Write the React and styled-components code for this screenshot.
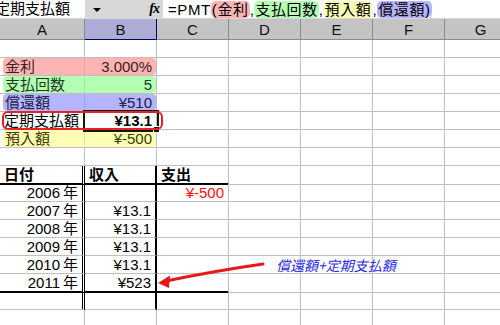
import React from 'react';
import styled, { createGlobalStyle } from 'styled-components';

const GlobalStyle = createGlobalStyle`
  html, body {
    margin:0;
    padding:0;
    background:#fff;
  }
  body {
    font-family:"Liberation Sans", "Noto Sans CJK JP", sans-serif;
  }
`;

const COLS = '85px repeat(6, 72px)';
const GRID = '1px solid #c0c0c0';

const Window = styled.div`
  position:relative;
  width:500px;
  height:325px;
  overflow:hidden;
  background:#fff;
`;

const FormulaBar = styled.div`
  display:flex;
  align-items:flex-start;
  height:19px;
  background:#d8d8d8;
`;

const NameBox = styled.div`
  width:85px;
  height:18px;
  background:#fff;
  overflow:hidden;
  display:flex;
  align-items:center;
  font-size:15px;
  line-height:18px;
  white-space:nowrap;

  span {
    margin-left:-5px;
  }
`;

const Controls = styled.div`
  width:78px;
  height:18px;
  display:flex;
  align-items:center;
  justify-content:space-between;
  padding:0 4px 0 8px;
  box-sizing:border-box;
`;

const DropArrow = styled.div`
  width:0;
  height:0;
  border-left:4px solid transparent;
  border-right:4px solid transparent;
  border-top:4px solid #000;
  margin-top:2px;
`;

const Fx = styled.span`
  font-family:"Liberation Serif", serif;
  font-style:italic;
  font-weight:bold;
  font-size:14px;
  letter-spacing:-1px;
`;

const FormulaInput = styled.div`
  flex:1;
  height:18px;
  background:#fff;
  display:flex;
  align-items:center;
  padding-left:5px;
  font-size:15px;
  line-height:17px;
  letter-spacing:0.6px;
  white-space:nowrap;
`;

const Token = styled.span`
  background:${p => p.$color};
  border-radius:5px;
  padding:0 1px;
`;

const HeaderRow = styled.div`
  display:grid;
  grid-template-columns:${COLS};
  height:21px;
`;

const HeaderCell = styled.div`
  background:${p => (p.$active ? '#acacd4' : '#c4c4c4')};
  border-right:1px solid ${p => (p.$active ? '#000060' : '#8a8a8a')};
  border-bottom:1px solid ${p => (p.$active ? '#000060' : '#8a8a8a')};
  box-sizing:border-box;
  display:flex;
  align-items:center;
  justify-content:center;
  font-size:15px;
  color:#111;
`;

const Row = styled.div`
  display:grid;
  grid-template-columns:${COLS};
  height:18px;
`;

const Cell = styled.div`
  position:relative;
  box-sizing:border-box;
  border-right:${p => p.$right || GRID};
  border-bottom:${p => p.$bottom || GRID};
  display:flex;
  align-items:center;
  justify-content:${p => (p.$align === 'right' ? 'flex-end' : 'flex-start')};
  padding:${p => (p.$flush ? '0' : '0 4px 0 4px')};
  font-size:15px;
  line-height:17px;
  font-weight:${p => (p.$bold ? 'bold' : 'normal')};
  color:${p => p.$color || '#000'};
  white-space:nowrap;
  ${p => p.$selected && `
    z-index:2;
    outline:2px solid #101800;
    outline-offset:0px;
    &::after {
      content:'';
      position:absolute;
      right:-4px;
      bottom:-4px;
      width:5px;
      height:5px;
      background:#101800;
      border:1px solid #fff;
    }
  `}
`;

const Fill = styled.div`
  flex:1;
  align-self:stretch;
  display:flex;
  align-items:center;
  justify-content:${p => (p.$edge === 'left' ? 'flex-start' : 'flex-end')};
  background:${p => p.$color};
  margin-left:${p => (p.$edge === 'left' ? '3px' : '0')};
  padding:${p => (p.$edge === 'left' ? '0 0 0 2px' : '0 4px 0 0')};
  border-radius:${p => (p.$edge === 'left' ? '4px 0 0 4px' : '0 4px 4px 0')};
  color:${p => p.$ink};
`;

const Ring = styled.div`
  position:absolute;
  left:2px;
  top:111px;
  width:161px;
  height:19px;
  box-sizing:border-box;
  border:2px solid #e8202a;
  border-radius:6px;
  z-index:3;
`;

const Note = styled.div`
  position:absolute;
  left:276px;
  top:256px;
  font-family:"Noto Sans CJK JP", sans-serif;
  font-size:14px;
  font-style:italic;
  color:#2a2ae8;
  line-height:18px;
  white-space:nowrap;
`;

const ArrowSvg = styled.svg`
  position:absolute;
  left:0;
  top:0;
  z-index:3;
  pointer-events:none;
`;

const HIGHLIGHTS = {
  pink: { bg: '#ffb4b4', ink: '#3c2020', line: '#e4a8a8' },
  green: { bg: '#b4ffb4', ink: '#203c20', line: '#a8e0a8' },
  blue: { bg: '#b4b4ff', ink: '#20204a', line: '#a0a0ec' },
  yellow: { bg: '#ffffb4', ink: '#3c3c00', line: '#e4e4a8' },
};

const params = [
  { label: '金利', value: '3.000%', hl: 'pink' },
  { label: '支払回数', value: '5', hl: 'green' },
  { label: '償還額', value: '¥510', hl: 'blue' },
  { label: '定期支払額', value: '¥13.1', selected: true },
  { label: '預入額', value: '¥-500', hl: 'yellow' },
];

const flows = [
  { year: '2006', income: '', out: '¥-500' },
  { year: '2007', income: '¥13.1' },
  { year: '2008', income: '¥13.1' },
  { year: '2009', income: '¥13.1' },
  { year: '2010', income: '¥13.1' },
  { year: '2011', income: '¥523', last: true },
];

const Blanks = ({ from = 0 }) =>
  Array.from({ length: 7 - from }).map((_, i) => <Cell key={i} />);

const TableRow = ({ a, b, c, cColor, bottom, bold, align = 'right' }) => {
  const line = bottom ? '2px solid #000' : undefined;
  return (
    <Row>
      <Cell $align={align} $bold={bold} $bottom={line} $right="3px double #000">{a}</Cell>
      <Cell $align={align} $bold={bold} $bottom={line} $right="2px solid #000">{b}</Cell>
      <Cell $align={align} $bold={bold} $bottom={line} $color={cColor}>{c}</Cell>
      <Blanks from={3} />
    </Row>
  );
};

function App() {
  return (
    <Window>
      <GlobalStyle />
      <FormulaBar>
        <NameBox><span>定期支払額</span></NameBox>
        <Controls>
          <DropArrow />
          <Fx>fx</Fx>
        </Controls>
        <FormulaInput>
          =PMT<Token $color="#ffb4b4">(金利</Token>,
          <Token $color="#b4ffb4">支払回数</Token>,
          <Token $color="#ffffb4">預入額</Token>,
          <Token $color="#b4b4ff">償還額)</Token>
        </FormulaInput>
      </FormulaBar>

      <HeaderRow>
        {['A', 'B', 'C', 'D', 'E', 'F', 'G'].map(l => (
          <HeaderCell key={l} $active={l === 'B'}>{l}</HeaderCell>
        ))}
      </HeaderRow>

      <Row><Blanks /></Row>

      {params.map(p => {
        const h = HIGHLIGHTS[p.hl];
        if (!h) {
          return (
            <Row key={p.label}>
              <Cell>{p.label}</Cell>
              <Cell $align="right" $bold $selected>{p.value}</Cell>
              <Blanks from={2} />
            </Row>
          );
        }
        return (
          <Row key={p.label}>
            <Cell $flush $right={`1px solid ${h.line}`}>
              <Fill $edge="left" $color={h.bg} $ink={h.ink}>{p.label}</Fill>
            </Cell>
            <Cell $flush>
              <Fill $edge="right" $color={h.bg} $ink={h.ink}>{p.value}</Fill>
            </Cell>
            <Blanks from={2} />
          </Row>
        );
      })}

      <Row><Blanks /></Row>

      <TableRow a="日付" b="収入" c="支出" bold bottom align="left" />
      {flows.map(f => (
        <TableRow
          key={f.year}
          a={`${f.year}\u2009年`}
          b={f.income}
          c={f.out}
          cColor="#ff1010"
          bottom={f.last}
        />
      ))}
      <TableRow />
      <Row><Blanks /></Row>

      <Ring />
      <ArrowSvg width="500" height="325" viewBox="0 0 500 325">
        <path
          d="M263 264 C 235 268, 200 274, 166 281"
          stroke="#e81818"
          strokeWidth="3"
          fill="none"
          strokeLinecap="round"
        />
        <polygon points="158,283 170,275.5 169,288" fill="#e81818" />
      </ArrowSvg>
      <Note>償還額+定期支払額</Note>
    </Window>
  );
}

export default App;
